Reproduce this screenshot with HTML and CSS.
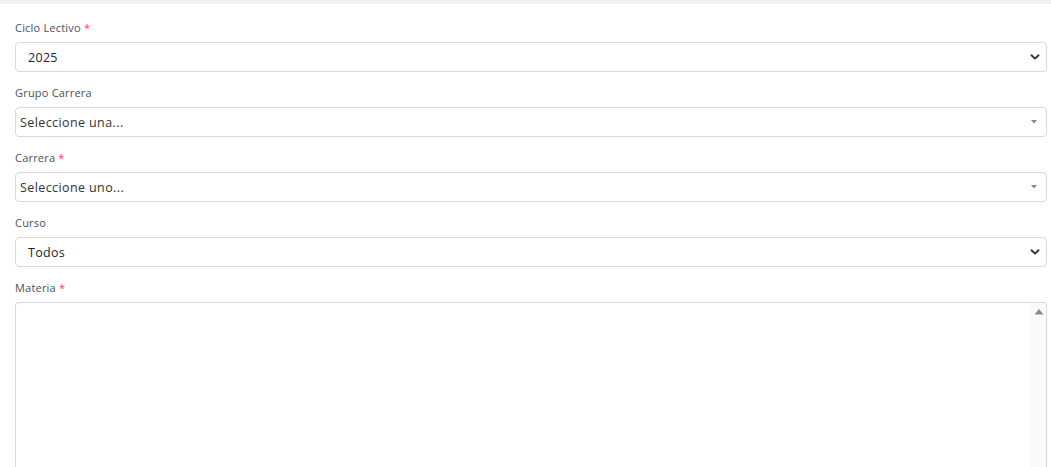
FILE: index.html
```html
<!DOCTYPE html>
<html lang="es">
<head>
<meta charset="utf-8">
<title>Formulario</title>
<link rel="stylesheet" href="styles.css">
</head>
<body>
<div class="topbar"></div>
<form class="form">
  <div class="group">
    <label class="label">Ciclo Lectivo <span class="req">*</span></label>
    <div class="control native">
      <span class="value">2025</span>
      <svg class="chev" width="10" height="8" viewBox="0 0 10 8"><path d="M1.5 2.2 L5 5.6 L8.5 2.2" fill="none" stroke="#343a40" stroke-width="2" stroke-linecap="round" stroke-linejoin="round"/></svg>
    </div>
  </div>
  <div class="group">
    <label class="label">Grupo Carrera</label>
    <div class="control s2">
      <span class="value">Seleccione una...</span>
      <svg class="caret" width="6" height="4" viewBox="0 0 6 4"><path d="M0 0 H6 L3 3.5 Z" fill="#888"/></svg>
    </div>
  </div>
  <div class="group">
    <label class="label">Carrera <span class="req">*</span></label>
    <div class="control s2">
      <span class="value">Seleccione uno...</span>
      <svg class="caret" width="6" height="4" viewBox="0 0 6 4"><path d="M0 0 H6 L3 3.5 Z" fill="#888"/></svg>
    </div>
  </div>
  <div class="group">
    <label class="label">Curso</label>
    <div class="control native">
      <span class="value">Todos</span>
      <svg class="chev" width="10" height="8" viewBox="0 0 10 8"><path d="M1.5 2.2 L5 5.6 L8.5 2.2" fill="none" stroke="#343a40" stroke-width="2" stroke-linecap="round" stroke-linejoin="round"/></svg>
    </div>
  </div>
  <div class="group last">
    <label class="label">Materia <span class="req">*</span></label>
    <div class="listbox">
      <div class="list-area"></div>
      <div class="scrollbar">
        <svg class="up" width="10" height="7" viewBox="0 0 10 7"><path d="M0.5 6.5 L5 1 L9.5 6.5 Z" fill="#8a8a8a"/></svg>
      </div>
    </div>
  </div>
</form>
</body>
</html>
```
FILE: styles.css
```css
* { box-sizing: border-box; }
html, body { margin: 0; padding: 0; background: #ffffff; }
body {
  font-family: "Open Sans", "Liberation Sans", sans-serif;
  color: #212529;
  overflow: hidden;
  height: 467px;
}
.topbar {
  height: 4px;
  background: #eef0f4;
}
.form {
  display: flex;
  flex-direction: column;
  padding: 14px 4px 0 15px;
}
.group {
  display: flex;
  flex-direction: column;
  margin-bottom: 11px;
}
.group.last { margin-bottom: 0; }
.label {
  height: 19px;
  line-height: 19px;
  font-size: 11px;
  letter-spacing: 0.2px;
  color: #4b515c;
  margin-bottom: 5px;
}
.req { color: #f1416c; }
.control {
  height: 30px;
  border: 1px solid #d8d9de;
  border-radius: 4px;
  display: flex;
  align-items: center;
  justify-content: space-between;
  background: #fff;
}
.native { padding: 0 6px 0 12px; }
.native .value { font-size: 12.5px; letter-spacing: 0.3px; color: #212529; }
.s2 { padding: 0 9px 0 4px; }
.s2 .value { font-size: 12.5px; letter-spacing: 0.4px; color: #333; }
.chev { display: block; }
.caret { display: block; }
.listbox {
  height: 165px;
  border: 1px solid #d8d9de;
  border-bottom: none;
  border-radius: 4px 4px 0 0;
  display: flex;
  overflow: hidden;
}
.list-area { flex: 1; }
.scrollbar {
  width: 15px;
  background: #fafafa;
  display: flex;
  justify-content: center;
  padding-top: 5px;
}
.up { display: block; }
```
